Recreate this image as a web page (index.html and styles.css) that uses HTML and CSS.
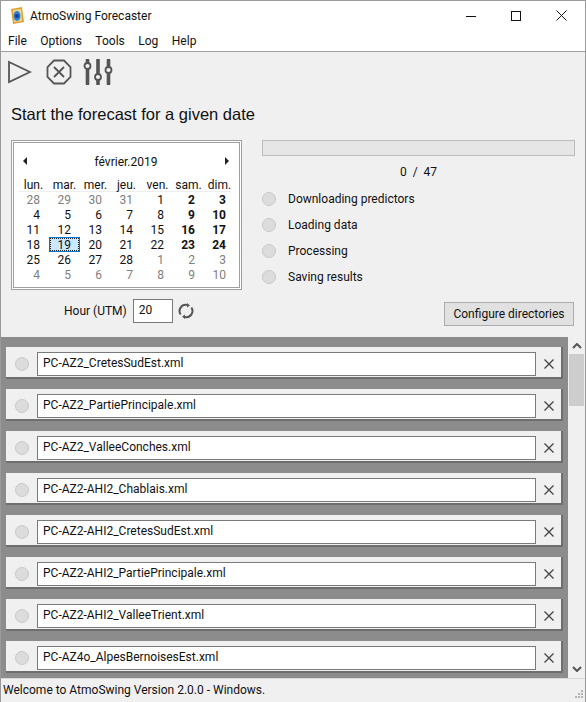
FILE: index.html
```html
<!DOCTYPE html>
<html lang="fr">
  <head>
    <meta charset="UTF-8" />
    <title>AtmoSwing Forecaster</title>
    <link rel="stylesheet" href="styles.css">
  </head>
  <body>
    <div class="window">
      <div class="titlebar">
        <svg class="app-icon" width="14" height="17" viewBox="0 0 14 17">
          <path d="M1 2 L12 0 L14 15 L3 17 Z" fill="#e0a030" />
          <path d="M3 3 L11 2 L12 14 L4 15 Z" fill="#e8d890" />
          <ellipse cx="7" cy="9" rx="3.5" ry="5" fill="#2f7fd0" />
          <circle cx="7" cy="9" r="2" fill="#123a9c" />
        </svg>
        <span class="title-text">AtmoSwing Forecaster</span>
        <div class="win-buttons">
          <svg width="10" height="10" viewBox="0 0 10 10"><path d="M0 5.5 H10" stroke="#111" fill="none" /></svg>
          <svg width="10" height="10" viewBox="0 0 10 10"><rect x="0.5" y="0.5" width="9" height="9" stroke="#111" fill="none" /></svg>
          <svg width="11" height="11" viewBox="0 0 11 11"><path d="M0.5 0.5 L10.5 10.5 M10.5 0.5 L0.5 10.5" stroke="#111" fill="none" /></svg>
        </div>
      </div>
      <div class="menubar">
        <span>File</span>
        <span>Options</span>
        <span>Tools</span>
        <span>Log</span>
        <span>Help</span>
      </div>

      <div class="toolbar">
        <svg width="24" height="24" viewBox="0 0 24 24"><path d="M1 2 L22 12 L1 22 Z" fill="none" stroke="#555" stroke-width="1.8" /></svg>
        <svg width="26" height="26" viewBox="0 0 26 26"><path d="M8 1.5 H18 L24.500 8 V18 L18 24.500 H8 L1.500 18 V8 Z M8 8 L18 18 M18 8 L8 18" fill="none" stroke="#555" stroke-width="1.8" /></svg>
        <svg width="30" height="26" viewBox="0 0 30 26">
          <path d="M4.500 1 V25 M15 1 V25 M25.500 1 V25" stroke="#555" stroke-width="3.6" stroke-linecap="round" />
          <circle cx="4.500" cy="7" r="3" fill="#f0f0f0" stroke="#555" stroke-width="1.800" />
          <circle cx="15" cy="18" r="3" fill="#f0f0f0" stroke="#555" stroke-width="1.800" />
          <circle cx="25.500" cy="11" r="3" fill="#f0f0f0" stroke="#555" stroke-width="1.800" />
        </svg>
      </div>

      <h1 class="heading">Start the forecast for a given date</h1>

      <div class="panels">
        <div class="left-panel">
          <div class="calendar">
            <div class="cal-inner">
              <div class="cal-head">
                <span class="arrow-left"></span>
                <span>février.2019</span>
                <span class="arrow-right"></span>
              </div>
              <div class="cal-days">
                <span>lun.</span><span>mar.</span><span>mer.</span><span>jeu.</span><span>ven.</span><span>sam.</span><span>dim.</span>
              </div>
              <div class="cal-grid">
                <span class="off">28</span><span class="off">29</span><span class="off">30</span><span class="off">31</span><span>1</span><span class="we">2</span><span class="we">3</span>
                <span>4</span><span>5</span><span>6</span><span>7</span><span>8</span><span class="we">9</span><span class="we">10</span>
                <span>11</span><span>12</span><span>13</span><span>14</span><span>15</span><span class="we">16</span><span class="we">17</span>
                <span>18</span><span class="today">19</span><span>20</span><span>21</span><span>22</span><span class="we">23</span><span class="we">24</span>
                <span>25</span><span>26</span><span>27</span><span>28</span><span class="off">1</span><span class="off">2</span><span class="off">3</span>
                <span class="off">4</span><span class="off">5</span><span class="off">6</span><span class="off">7</span><span class="off">8</span><span class="off">9</span><span class="off">10</span>
              </div>
            </div>
          </div>
          <div class="hour-row">
            <label>Hour (UTM)</label>
            <div class="hour-input">20</div>
            <svg width="16" height="16" viewBox="0 0 16 16">
              <path d="M2.600 11.500 A6.200 6.200 0 0 1 9 2 M13.400 4.500 A6.200 6.200 0 0 1 7 14" fill="none" stroke="#555" stroke-width="2" />
              <path d="M9 0 L12 2.500 L9 4.500 Z M7 16 L4 13.500 L7 11.500 Z" fill="#555" />
            </svg>
          </div>
        </div>

        <div class="right-panel">
          <div class="progress"></div>
          <div class="count">0&nbsp;&nbsp;/&nbsp;&nbsp;47</div>
          <div class="step"><span class="led"></span>Downloading predictors</div>
          <div class="step"><span class="led"></span>Loading data</div>
          <div class="step"><span class="led"></span>Processing</div>
          <div class="step"><span class="led"></span>Saving results</div>
          <div class="btn-row"><button class="btn">Configure directories</button></div>
        </div>
      </div>

      <div class="list-area">
        <div class="list">
          <div class="row"><span class="led"></span><div class="file">PC-AZ2_CretesSudEst.xml</div><svg class="remove" width="10" height="10" viewBox="0 0 10 10"><path d="M0.500 0.500 L9.500 9.500 M9.500 0.500 L0.500 9.500" /></svg></div>
          <div class="row"><span class="led"></span><div class="file">PC-AZ2_PartiePrincipale.xml</div><svg class="remove" width="10" height="10" viewBox="0 0 10 10"><path d="M0.500 0.500 L9.500 9.500 M9.500 0.500 L0.500 9.500" /></svg></div>
          <div class="row"><span class="led"></span><div class="file">PC-AZ2_ValleeConches.xml</div><svg class="remove" width="10" height="10" viewBox="0 0 10 10"><path d="M0.500 0.500 L9.500 9.500 M9.500 0.500 L0.500 9.500" /></svg></div>
          <div class="row"><span class="led"></span><div class="file">PC-AZ2-AHI2_Chablais.xml</div><svg class="remove" width="10" height="10" viewBox="0 0 10 10"><path d="M0.500 0.500 L9.500 9.500 M9.500 0.500 L0.500 9.500" /></svg></div>
          <div class="row"><span class="led"></span><div class="file">PC-AZ2-AHI2_CretesSudEst.xml</div><svg class="remove" width="10" height="10" viewBox="0 0 10 10"><path d="M0.500 0.500 L9.500 9.500 M9.500 0.500 L0.500 9.500" /></svg></div>
          <div class="row"><span class="led"></span><div class="file">PC-AZ2-AHI2_PartiePrincipale.xml</div><svg class="remove" width="10" height="10" viewBox="0 0 10 10"><path d="M0.500 0.500 L9.500 9.500 M9.500 0.500 L0.500 9.500" /></svg></div>
          <div class="row"><span class="led"></span><div class="file">PC-AZ2-AHI2_ValleeTrient.xml</div><svg class="remove" width="10" height="10" viewBox="0 0 10 10"><path d="M0.500 0.500 L9.500 9.500 M9.500 0.500 L0.500 9.500" /></svg></div>
          <div class="row"><span class="led"></span><div class="file">PC-AZ4o_AlpesBernoisesEst.xml</div><svg class="remove" width="10" height="10" viewBox="0 0 10 10"><path d="M0.500 0.500 L9.500 9.500 M9.500 0.500 L0.500 9.500" /></svg></div>
        </div>
        <div class="scrollbar">
          <svg width="10" height="6" viewBox="0 0 10 6"><path d="M1 5 L5 1 L9 5" fill="none" stroke="#555" stroke-width="2" /></svg>
          <div class="thumb"></div>
          <svg class="scroll-down" width="10" height="6" viewBox="0 0 10 6"><path d="M1 1 L5 5 L9 1" fill="none" stroke="#555" stroke-width="2" /></svg>
        </div>
      </div>

      <div class="statusbar">
        <span>Welcome to AtmoSwing Version 2.0.0 - Windows.</span>
        <svg class="grip" width="8" height="8" viewBox="0 0 8 8" fill="#b4b4b4">
          <rect x="6" y="0" width="2" height="2" />
          <rect x="3" y="3" width="2" height="2" />
          <rect x="6" y="3" width="2" height="2" />
          <rect x="0" y="6" width="2" height="2" />
          <rect x="3" y="6" width="2" height="2" />
          <rect x="6" y="6" width="2" height="2" />
        </svg>
      </div>
    </div>
  </body>
</html>
```

FILE: styles.css
```css
* {
  box-sizing: border-box;
}
body {
  margin: 0;
  font-family: Roboto, "Noto Sans", sans-serif;
  font-size: 12px;
  color: #111;
  background-color: #f0f0f0;
}
.window {
  width: 586px;
  height: 702px;
  display: flex;
  flex-direction: column;
  border: 1px solid #9a9a9a;
  border-bottom: none;
  overflow: hidden;
}
.titlebar {
  height: 29px;
  background-color: #fff;
  display: flex;
  align-items: center;
  padding-left: 9px;
  flex-shrink: 0;
}
.app-icon {
  margin-right: 6px;
}
.title-text {
  flex: 1;
}
.win-buttons {
  display: flex;
  align-items: center;
  gap: 35px;
  padding-right: 18px;
}
.menubar {
  height: 22px;
  background-color: #fff;
  border-bottom: 1px solid #a0a0a0;
  display: flex;
  align-items: center;
  gap: 13.5px;
  padding-left: 7px;
  padding-top: 1px;
  flex-shrink: 0;
}
.toolbar {
  display: flex;
  align-items: center;
  gap: 14px;
  padding: 0 0 0 7px;
  height: 40px;
  flex-shrink: 0;
}
.toolbar svg:last-child {
  margin-left: -3px;
}
.heading {
  margin: 0;
  padding: 12px 0 0 10px;
  height: 48px;
  font-family: "Liberation Sans", Arial, sans-serif;
  font-size: 16.5px;
  font-weight: normal;
  line-height: 20px;
  flex-shrink: 0;
}
.panels {
  display: flex;
  height: 197px;
  flex-shrink: 0;
}
.left-panel {
  width: 261px;
  padding-left: 10px;
}
.calendar {
  width: 231px;
  height: 150px;
  border: 1px solid #a0a0a0;
  padding: 1px;
  background-color: #fff;
}
.cal-inner {
  height: 100%;
  border: 1px solid #a0a0a0;
  background-color: #fff;
  padding: 0 8px;
}
.cal-head {
  height: 32px;
  padding-top: 6px;
  padding-right: 2px;
  padding-left: 1px;
  display: flex;
  align-items: center;
  justify-content: space-between;
}
.arrow-left,
.arrow-right {
  width: 0;
  height: 0;
  margin-bottom: 2px;
  border-top: 4px solid transparent;
  border-bottom: 4px solid transparent;
}
.arrow-left {
  border-right: 4px solid #222;
}
.arrow-right {
  border-left: 4px solid #222;
}
.cal-days,
.cal-grid {
  display: grid;
  grid-template-columns: repeat(7, 31px);
  margin-left: -4px;
}
.cal-days {
  height: 17px;
  line-height: 20px;
  text-align: center;
  border-bottom: 1px solid #eee;
}
.cal-grid {
  grid-auto-rows: 15px;
  line-height: 17px;
  text-align: right;
}
.cal-grid span {
  padding-right: 9px;
}
.cal-grid .off {
  color: #808080;
}
.cal-grid .we {
  font-weight: bold;
}
.cal-grid .today {
  background-color: #cce8ff;
  border: 1px solid #0078d7;
  outline: 1px dotted #222;
  outline-offset: -2px;
  line-height: 15px;
  padding-right: 8px;
}
.hour-row {
  display: flex;
  align-items: center;
  margin-top: 9px;
  padding-left: 53px;
  gap: 5px;
}
.hour-row label {
  margin-right: 1px;
}
.hour-input {
  width: 40px;
  height: 24px;
  border: 1px solid #7a7a7a;
  background-color: #fff;
  padding-left: 5px;
  line-height: 21px;
}
.right-panel {
  flex: 1;
  padding-right: 10px;
}
.progress {
  height: 16px;
  background-color: #e6e6e6;
  border: 1px solid #bcbcbc;
}
.count {
  height: 30px;
  line-height: 33px;
  text-align: center;
}
.step {
  height: 26px;
  display: flex;
  align-items: center;
  gap: 10px;
}
.led {
  display: inline-block;
  width: 14px;
  height: 14px;
  border-radius: 50%;
  background-color: #dcdcdc;
  border: 1px solid #c8c8c8;
  flex-shrink: 0;
}
.step .led {
  margin-right: 2px;
}
.btn-row {
  display: flex;
  justify-content: flex-end;
  margin-top: 12px;
  padding-right: 1px;
}
.btn {
  width: 130px;
  height: 24px;
  background-color: #e1e1e1;
  border: 1px solid #adadad;
  font: inherit;
  color: inherit;
  padding: 0;
}
.list-area {
  flex: 1;
  display: flex;
  min-height: 0;
}
.list {
  width: 567px;
  background-color: #8c8c8c;
  padding: 10px 5px 0 5px;
  overflow: hidden;
}
.row {
  height: 32px;
  margin-bottom: 10px;
  background-color: #f0f0f0;
  border-right: 2px solid #6e6e6e;
  border-bottom: 2px solid #6e6e6e;
  display: flex;
  align-items: center;
  padding-top: 4px;
  padding-left: 9px;
}
.row .led {
  margin-right: 8px;
  margin-bottom: 1px;
}
.file {
  width: 499px;
  height: 24px;
  background-color: #fff;
  border: 1px solid #7a7a7a;
  padding-left: 5px;
  line-height: 21px;
}
.remove {
  margin-left: 8px;
  margin-bottom: 1px;
  stroke: #444;
  stroke-width: 1.3;
  fill: none;
}
.scrollbar {
  width: 17px;
  display: flex;
  flex-direction: column;
  align-items: center;
  padding-top: 6px;
}
.thumb {
  width: 15px;
  height: 52px;
  margin-top: 5px;
  background-color: #cdcdcd;
}
.scroll-down {
  margin-top: auto;
  margin-bottom: 6px;
}
.statusbar {
  height: 24px;
  border-top: 1px solid #d8d8d8;
  padding-left: 2px;
  line-height: 23px;
  display: flex;
  justify-content: space-between;
  flex-shrink: 0;
}
.grip {
  align-self: flex-end;
  margin: 0 2px 4px 0;
}
```
